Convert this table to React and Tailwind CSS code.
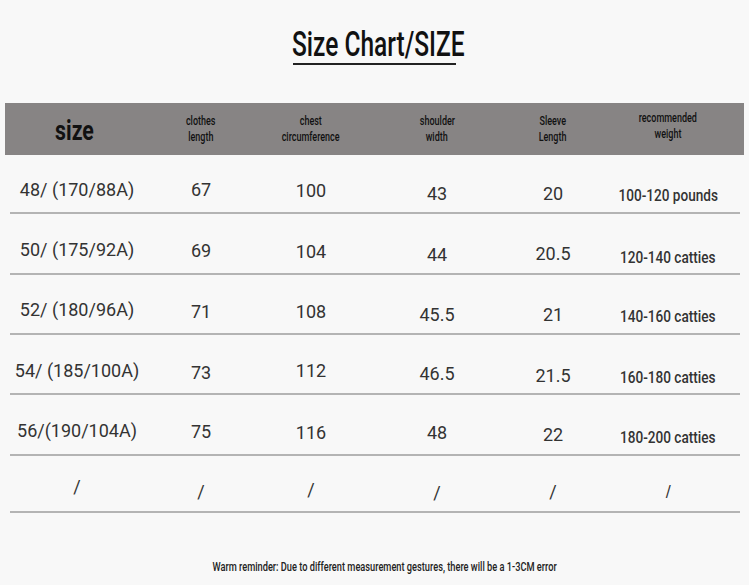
import React from 'react'

const rob = "font-['Roboto','Liberation_Sans',sans-serif]"

const cols = 'grid grid-cols-[134px_114px_106px_146px_86px_144px]'

const headers = [
    ['clothes', 'length', ''],
    ['chest', 'circumference', ''],
    ['shoulder', 'width', ''],
    ['Sleeve', 'Length', ''],
    ['recommended', 'weight', '-translate-y-[3px]'],
]

// each cell: [text, vertical nudge]
const rows = [
    { h: 'h-[59px]', cells: [['48/ (170/88A)', 'translate-y-[6px]'], ['67', 'translate-y-[6px]'], ['100', 'translate-y-[7px]'], ['43', 'translate-y-[10px]'], ['20', 'translate-y-[10px]'], ['100-120 pounds', 'translate-y-[12px]']] },
    { h: 'h-[61px]', cells: [['50/ (175/92A)', 'translate-y-[6px]'], ['69', 'translate-y-[7px]'], ['104', 'translate-y-[8px]'], ['44', 'translate-y-[11px]'], ['20.5', 'translate-y-[10px]'], ['120-140 catties', 'translate-y-[14px]']] },
    { h: 'h-[60px]', cells: [['52/ (180/96A)', 'translate-y-[5px]'], ['71', 'translate-y-[7px]'], ['108', 'translate-y-[7px]'], ['45.5', 'translate-y-[10px]'], ['21', 'translate-y-[10px]'], ['140-160 catties', 'translate-y-[13px]']] },
    { h: 'h-[60px]', cells: [['54/ (185/100A)', 'translate-y-[6px]'], ['73', 'translate-y-[8px]'], ['112', 'translate-y-[6px]'], ['46.5', 'translate-y-[9px]'], ['21.5', 'translate-y-[11px]'], ['160-180 catties', 'translate-y-[14px]']] },
    { h: 'h-[61px]', cells: [['56/(190/104A)', 'translate-y-[6px]'], ['75', 'translate-y-[7px]'], ['116', 'translate-y-[8px]'], ['48', 'translate-y-[8px]'], ['22', 'translate-y-[10px]'], ['180-200 catties', 'translate-y-[13px]']] },
    { h: 'h-[57px]', cells: [['/', 'translate-y-[3px]'], ['/', 'translate-y-[8px]'], ['/', 'translate-y-[6px]'], ['/', 'translate-y-[9px]'], ['/', 'translate-y-[8px]'], ['/', 'translate-y-[8px]']] },
]

export default function App() {
    return (
        <div className="w-[749px] h-[585px] bg-[#f8f8f8] overflow-hidden">
            {/* title */}
            <div className="flex flex-col items-center pt-[27px]">
                <h1 className={`${rob} text-[35px] leading-[36px] font-medium text-[#111] inline-block scale-x-[0.7] translate-x-[4px]`}>Size Chart/SIZE</h1>
                <div className="w-[163px] h-[2px] bg-[#222]" />
            </div>

            {/* header band */}
            <div className="mx-[5px] mt-[38px] h-[52px] bg-[#878484] flex items-center">
                <div className={`${cols} w-full pl-[5px] items-center`}>
                    <div className="text-center -translate-x-[3px] translate-y-[2px]">
                        <span className={`${rob} inline-block text-[28px] leading-[32px] font-bold text-[#111] scale-x-[0.76]`}>size</span>
                    </div>
                    {headers.map((h, i) => (
                        <div key={i} className={`${rob} text-[12px] leading-[16px] font-medium text-[#111] text-center ${h[2]}`}>
                            <div><span className="inline-block scale-x-[0.75]">{h[0]}</span></div>
                            <div><span className="inline-block scale-x-[0.75]">{h[1]}</span></div>
                        </div>
                    ))}
                </div>
            </div>

            {/* body */}
            <div className="mx-[10px] w-[730px]">
                {rows.map((r, ri) => (
                    <div key={ri} className={`${cols} ${r.h} items-center border-b-2 border-[#b4b4b4]`}>
                        {r.cells.map((c, ci) => (
                            <div key={ci} className={`text-center ${rob} text-[#333] ${c[1]}`}>
                                {ci === 5 ? (
                                    <span className="inline-block text-[17px] font-medium scale-x-[0.8]">{c[0]}</span>
                                ) : (
                                    <span className="text-[18px]">{c[0]}</span>
                                )}
                            </div>
                        ))}
                    </div>
                ))}
            </div>

            {/* footer */}
            <div className={`${rob} text-[12px] leading-[16px] font-medium text-[#222] text-center mt-[46px] translate-x-[10px]`}>
                <span className="inline-block scale-x-[0.77]">Warm reminder: Due to different measurement gestures, there will be a 1-3CM error</span>
            </div>
        </div>
    )
}
